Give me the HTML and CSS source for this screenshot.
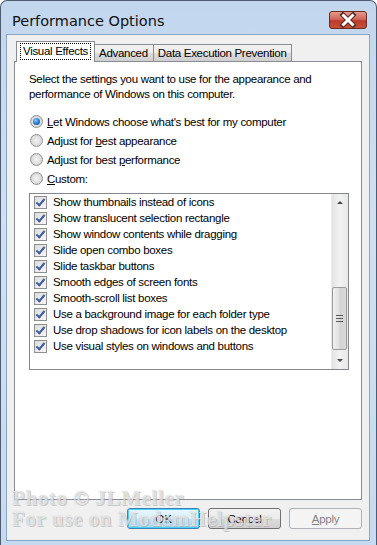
FILE: index.html
```html
<!DOCTYPE html>
<html>
<head>
<meta charset="utf-8">
<link rel="stylesheet" href="styles.css">
</head>
<body>
<div class="window">
  <div class="titlebar">
    <span class="title">Performance Options</span>
    <div class="close">
      <svg width="38" height="18" viewBox="0 0 38 18">
        <path d="M14 4 L24 14 M24 4 L14 14" stroke="#5a2a22" stroke-width="5" stroke-linecap="square"/>
        <path d="M14.5 4.5 L23.5 13.5 M23.5 4.5 L14.5 13.5" stroke="#ffffff" stroke-width="3" stroke-linecap="square"/>
      </svg>
    </div>
  </div>
  <div class="client">
    <div class="tabs">
      <div class="tab active"><span class="focus">Visual Effects</span></div>
      <div class="tab">Advanced</div>
      <div class="tab">Data Execution Prevention</div>
    </div>
    <div class="panel">
      <p class="intro">Select the settings you want to use for the appearance and performance of Windows on this computer.</p>
      <div class="radios">
        <div class="radio-row"><span class="radio checked"></span><span><u>L</u>et Windows choose what's best for my computer</span></div>
        <div class="radio-row"><span class="radio"></span><span>Adjust for <u>b</u>est appearance</span></div>
        <div class="radio-row"><span class="radio"></span><span>Adjust for best <u>p</u>erformance</span></div>
        <div class="radio-row"><span class="radio"></span><span><u>C</u>ustom:</span></div>
      </div>
      <div class="listbox">
        <ul class="items">
          <li><span class="check"></span>Show thumbnails instead of icons</li>
          <li><span class="check"></span>Show translucent selection rectangle</li>
          <li><span class="check"></span>Show window contents while dragging</li>
          <li><span class="check"></span>Slide open combo boxes</li>
          <li><span class="check"></span>Slide taskbar buttons</li>
          <li><span class="check"></span>Smooth edges of screen fonts</li>
          <li><span class="check"></span>Smooth-scroll list boxes</li>
          <li><span class="check"></span>Use a background image for each folder type</li>
          <li><span class="check"></span>Use drop shadows for icon labels on the desktop</li>
          <li><span class="check"></span>Use visual styles on windows and buttons</li>
        </ul>
        <div class="scrollbar">
          <div class="arrow up"></div>
          <div class="track"></div>
          <div class="thumb"><span class="grip"></span></div>
          <div class="arrow down"></div>
        </div>
      </div>
    </div>
    <div class="buttons">
      <div class="btn default">OK</div>
      <div class="btn">Cancel</div>
      <div class="btn disabled"><u>A</u>pply</div>
    </div>
  </div>
  <div class="watermark">
    <div>Photo © JLMeller</div>
    <div>For use on ModemHelpster</div>
  </div>
</div>
</body>
</html>
```

FILE: styles.css
```css
html, body {
  margin: 0;
  padding: 0;
  background: #ffffff;
}

.window {
  position: relative;
  width: 377px;
  height: 545px;
  box-sizing: border-box;
  border: 1px solid #4d5c6e;
  border-bottom: none;
  border-radius: 7px 7px 0 0;
  background: linear-gradient(to bottom, #c2d6ee 0%, #cfe0f3 40%, #c6dbf1 100%);
  padding: 0 6px 4px 5px;
  display: flex;
  flex-direction: column;
  font-family: "Liberation Sans", Arial, sans-serif;
  font-size: 11.5px;
  letter-spacing: -0.3px;
  color: #000;
  overflow: hidden;
}

.titlebar {
  height: 33px;
  display: flex;
  align-items: flex-start;
  justify-content: space-between;
  flex-shrink: 0;
}

.title {
  margin: 12px 0 0 6px;
  font-family: "DejaVu Sans", sans-serif;
  font-size: 14.5px;
  letter-spacing: 0;
  color: #111;
}

.close {
  margin: 10px 3px 0 0;
  width: 38px;
  height: 18px;
  border: 1px solid #6b2b22;
  border-radius: 3px;
  background: linear-gradient(to bottom, #e39a8c 0%, #d0675a 45%, #b93a2a 55%, #c8523b 100%);
  box-sizing: border-box;
  display: flex;
  align-items: center;
  justify-content: center;
  overflow: hidden;
}

.close svg {
  display: block;
  flex-shrink: 0;
}

.client {
  flex: 1;
  background: #f0f0f0;
  border: 1px solid #8ba6c4;
  display: flex;
  flex-direction: column;
  padding: 7px 7px 0 7px;
}

.tabs {
  display: flex;
  height: 19px;
  align-items: flex-end;
  padding-left: 2px;
}

.tab {
  height: 17px;
  box-sizing: border-box;
  border: 1px solid #898c95;
  border-bottom: none;
  border-left: none;
  background: linear-gradient(to bottom, #f2f2f2 0%, #ebebeb 50%, #dddddd 51%, #cfcfcf 100%);
  padding: 0 5px 0 4px;
  line-height: 16px;
  white-space: nowrap;
}

.tab.active {
  height: 21px;
  margin-bottom: -1px;
  border-left: 1px solid #898c95;
  background: #ffffff;
  position: relative;
  z-index: 1;
  padding: 2px 4px 0 4px;
  line-height: 15px;
}

.focus {
  display: inline-block;
  outline: 1px dotted #000;
  padding: 0 2px;
  line-height: 15px;
}

.panel {
  height: 439px;
  box-sizing: border-box;
  border: 1px solid #898c95;
  background: #ffffff;
  padding: 10px 0 0 14px;
}

.intro {
  margin: 0;
  width: 300px;
  line-height: 15px;
}

.radios {
  margin-top: 10px;
  display: flex;
  flex-direction: column;
}

.radio-row {
  height: 19px;
  display: flex;
  align-items: center;
  gap: 4px;
  padding-left: 1px;
}

.radio {
  width: 13px;
  height: 13px;
  box-sizing: border-box;
  border-radius: 50%;
  border: 1px solid #8f9193;
  background: radial-gradient(circle at 50% 50%, #f4f4f4 0%, #dcdcdc 60%, #c8c8c8 100%);
  display: flex;
  align-items: center;
  justify-content: center;
}

.radio.checked::after {
  content: "";
  width: 7px;
  height: 7px;
  border-radius: 50%;
  background: radial-gradient(circle at 40% 35%, #8ad0ff 0%, #2a7ad8 50%, #0d3f8a 100%);
}

.listbox {
  margin-top: 5px;
  width: 320px;
  height: 177px;
  box-sizing: border-box;
  border: 1px solid #828790;
  background: #ffffff;
  display: flex;
}

.items {
  list-style: none;
  margin: 0;
  padding: 0 0 0 4px;
  flex: 1;
}

.items li {
  height: 16px;
  display: flex;
  align-items: center;
  gap: 6px;
  white-space: nowrap;
}

.check {
  width: 13px;
  height: 13px;
  box-sizing: border-box;
  border: 1px solid #8e8f8f;
  background: linear-gradient(135deg, #dcdcdc 0%, #f6f6f6 100%);
  flex-shrink: 0;
  position: relative;
}

.check::after {
  content: "";
  position: absolute;
  left: 3px;
  top: 0px;
  width: 3px;
  height: 7px;
  border-right: 2px solid #3c5b9a;
  border-bottom: 2px solid #3c5b9a;
  transform: rotate(40deg);
}

.scrollbar {
  width: 16px;
  display: flex;
  flex-direction: column;
  background: linear-gradient(to right, #e4e4e4, #f2f2f2 50%, #e8e8e8);
  border-left: 1px solid #eaeaea;
}

.arrow {
  height: 17px;
  display: flex;
  align-items: center;
  justify-content: center;
}

.arrow::after {
  content: "";
  width: 0;
  height: 0;
  border-left: 3px solid transparent;
  border-right: 3px solid transparent;
}

.arrow.up::after {
  border-bottom: 3px solid #4a4a4a;
}

.arrow.down::after {
  border-top: 3px solid #4a4a4a;
}

.track {
  flex: 1;
}

.thumb {
  height: 63px;
  margin: 0 1px 2px 0;
  box-sizing: border-box;
  border: 1px solid #9a9a9a;
  border-radius: 2px;
  background: linear-gradient(to right, #f1f1f1 0%, #e0e0e0 45%, #d3d3d3 55%, #dadada 100%);
  display: flex;
  align-items: center;
  justify-content: center;
}

.grip {
  width: 7px;
  height: 7px;
  background: repeating-linear-gradient(to bottom, #5a5a5a 0px, #5a5a5a 1px, transparent 1px, transparent 3px);
}

.buttons {
  display: flex;
  justify-content: flex-end;
  gap: 8px;
  margin-top: 8px;
}

.btn {
  width: 73px;
  height: 21px;
  box-sizing: border-box;
  border: 1px solid #707070;
  border-radius: 3px;
  background: linear-gradient(to bottom, #f2f2f2 0%, #ebebeb 50%, #dddddd 51%, #cfcfcf 100%);
  display: flex;
  align-items: center;
  justify-content: center;
}

.btn.default {
  border-color: #3c7fb1;
  box-shadow: inset 0 0 0 1px #48d2fb;
  background: linear-gradient(to bottom, #eaf6fd 0%, #d9f0fc 50%, #bee6fd 51%, #a7d9f5 100%);
}

.btn.disabled {
  border-color: #adb2b5;
  background: #f4f4f4;
  color: #838383;
}

.watermark {
  position: absolute;
  left: 11px;
  top: 487px;
  font-family: "Liberation Serif", serif;
  font-weight: bold;
  font-size: 21px;
  line-height: 21px;
  letter-spacing: 0.6px;
  color: rgba(255, 255, 255, 0.6);
  text-shadow: 0 0 1px rgba(140, 140, 140, 0.55), 1px 1px 0 rgba(150, 150, 150, 0.4);
  white-space: nowrap;
  pointer-events: none;
}
```
